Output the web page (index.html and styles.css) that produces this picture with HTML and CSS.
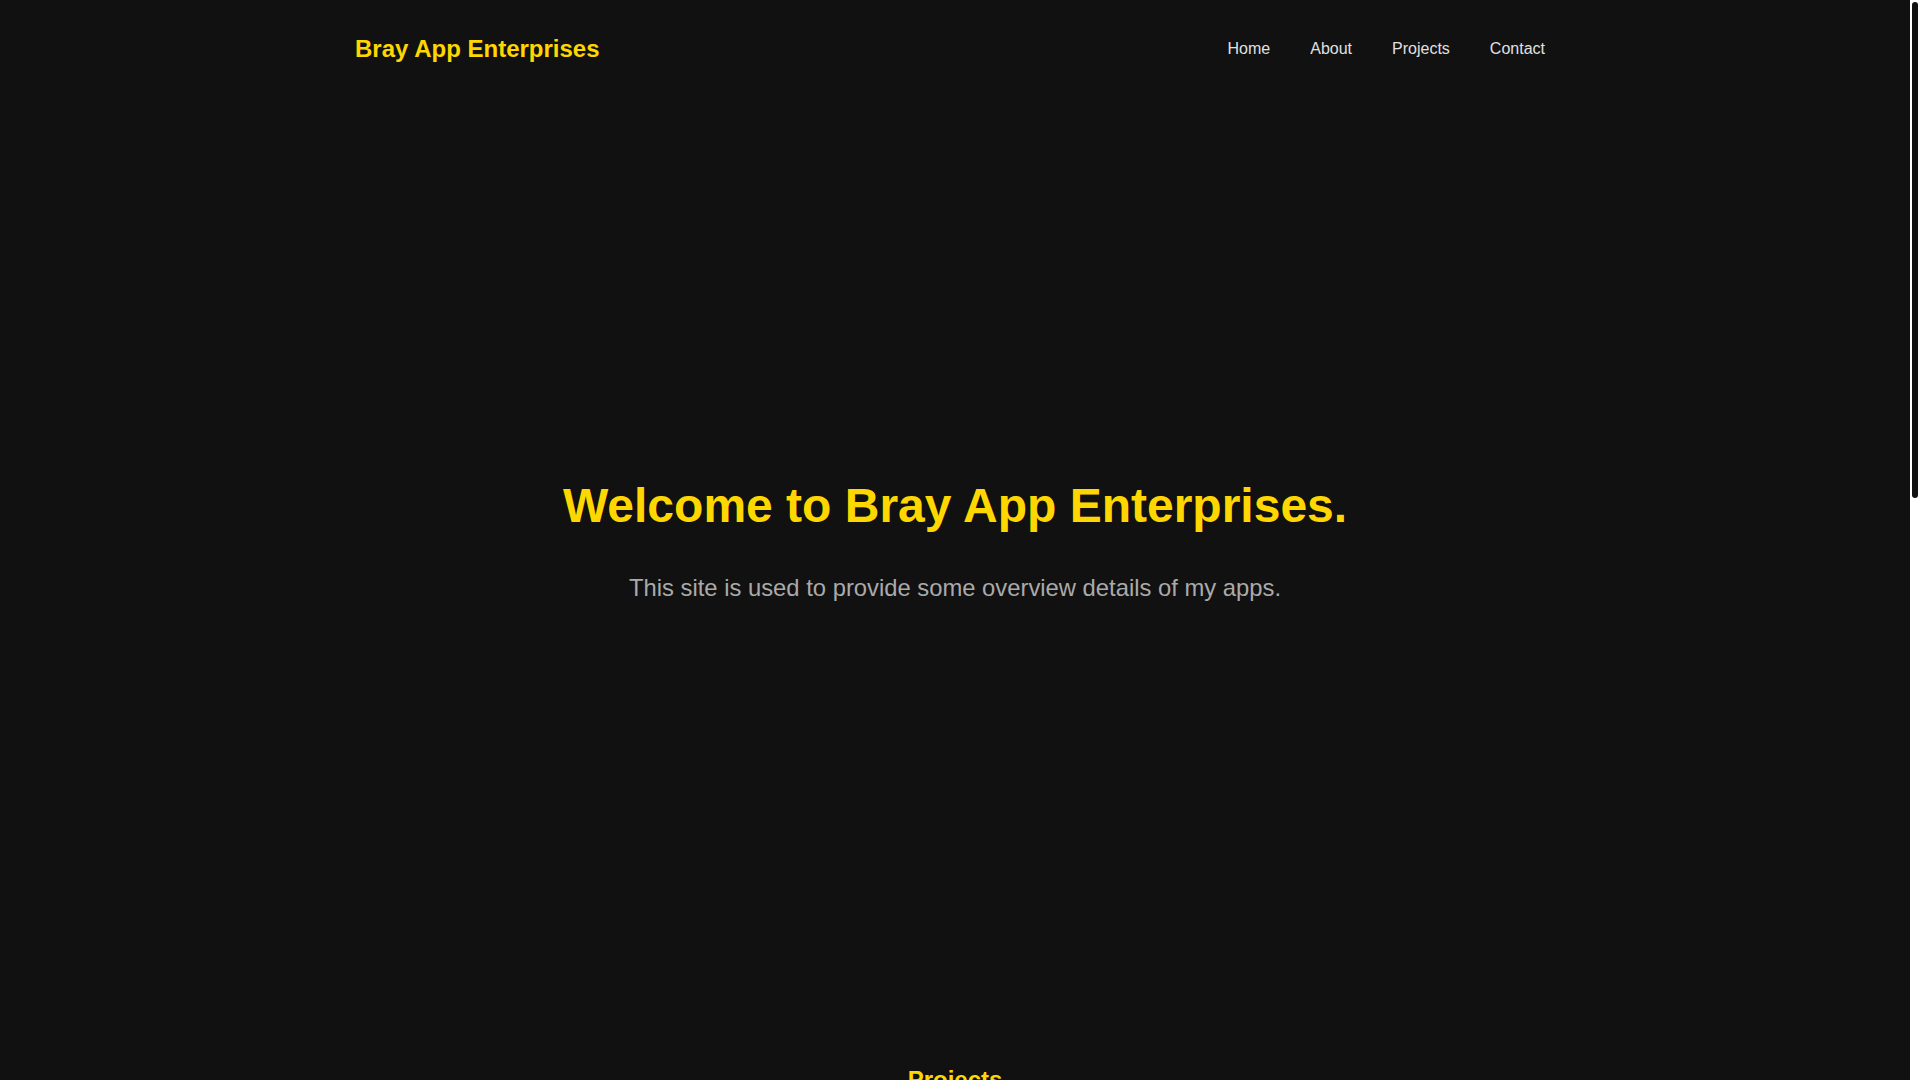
FILE: index.html
```html
<!DOCTYPE html>
<html lang="en">
<head>
<meta charset="utf-8">
<title>Bray App Enterprises</title>
<link rel="stylesheet" href="styles.css">
</head>
<body>
<div class="page">
  <header class="site-header">
    <div class="container header-inner">
      <a class="logo" href="#home">Bray App Enterprises</a>
      <nav class="nav">
        <ul class="nav-list">
          <li><a class="nav-link" href="#home">Home</a></li>
          <li><a class="nav-link" href="#about">About</a></li>
          <li><a class="nav-link" href="#projects">Projects</a></li>
          <li><a class="nav-link" href="#contact">Contact</a></li>
        </ul>
      </nav>
    </div>
  </header>
  <main>
    <section class="hero" id="home">
      <h1 class="hero-title">Welcome to Bray App Enterprises.</h1>
      <p class="hero-text">This site is used to provide some overview details of my apps.</p>
    </section>
    <section class="section section-projects" id="projects">
      <h2 class="section-title">Projects</h2>
    </section>
    <section class="section section-about" id="about">
      <h2 class="section-title">About</h2>
    </section>
    <section class="section section-contact" id="contact">
      <h2 class="section-title">Contact</h2>
    </section>
  </main>
  <footer class="site-footer">
    <p class="footer-text">&copy; Bray App Enterprises</p>
  </footer>
</div>
<div class="scrollbar" aria-hidden="true"><div class="scrollbar-thumb"></div></div>
</body>
</html>
```
FILE: styles.css
```css
html {
  background: #111111;
  scrollbar-width: none;
}

::-webkit-scrollbar {
  width: 0;
  height: 0;
}

body {
  margin: 0;
  background: #111111;
  color: #e0e0e0;
  font-family: "Liberation Sans", Arial, sans-serif;
}

.page {
  padding-right: 10px;
}

.scrollbar {
  position: fixed;
  top: 0;
  right: 0;
  bottom: 0;
  width: 10px;
  background: #ffffff;
}

.scrollbar-thumb {
  position: absolute;
  top: 2px;
  left: 2px;
  width: 6px;
  height: 496px;
  border-radius: 3px;
  background: #111111;
}

.container {
  max-width: 1200px;
  margin: 0 auto;
}

.site-header {
  padding: 35px 0;
}

.header-inner {
  display: flex;
  align-items: center;
  justify-content: space-between;
}

.logo {
  color: #ffd700;
  font-size: 24px;
  font-weight: bold;
  text-decoration: none;
}

.nav-list {
  display: flex;
  list-style: none;
  margin: 0;
  padding: 0;
}

.nav-list li + li {
  margin-left: 20px;
}

.nav-link {
  display: block;
  padding: 0 10px;
  color: #e0e0e0;
  font-size: 16px;
  text-decoration: none;
}

.hero {
  padding: 379px 20px 384px;
  text-align: center;
}

.hero-title {
  margin: 0 0 39px;
  color: #ffd700;
  font-size: 48px;
  font-weight: bold;
  line-height: 1.2;
}

.hero-text {
  margin: 0;
  color: #aaaaaa;
  font-size: 23.8px;
  line-height: 28.8px;
}

.section {
  box-sizing: border-box;
  padding: 80px 20px 40px;
  text-align: center;
}

.section-projects {
  min-height: 560px;
}

.section-about {
  min-height: 400px;
}

.section-contact {
  min-height: 320px;
}

.section-title {
  margin: 0;
  color: #ffd700;
  font-size: 24px;
  font-weight: bold;
  line-height: 1.2;
}

.site-footer {
  box-sizing: border-box;
  height: 77px;
  padding: 28px 20px;
  text-align: center;
}

.footer-text {
  margin: 0;
  color: #aaaaaa;
  font-size: 14px;
}
```
